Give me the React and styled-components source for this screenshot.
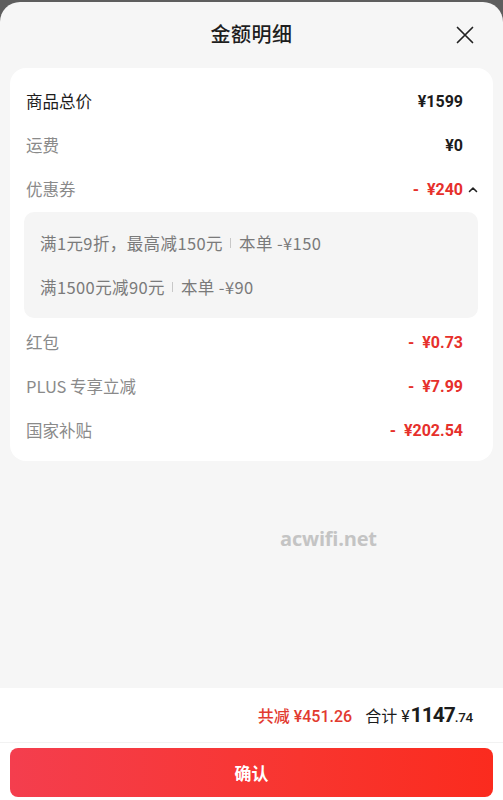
import React from "react";
import styled, { createGlobalStyle } from "styled-components";

const Global = createGlobalStyle`
  html, body { margin: 0; padding: 0; background: #5e5e5e; }
  body { font-family: "Noto Sans", "Noto Sans CJK SC", sans-serif; }
  * { box-sizing: border-box; }
`;

const Sheet = styled.div`
  margin-top: 2px;
  height: 798px;
  background: #f6f6f6;
  border-radius: 20px 20px 0 0;
  display: flex;
  flex-direction: column;
  overflow: hidden;
`;

const Header = styled.div`
  height: 66px;
  padding-bottom: 3px;
  display: flex;
  align-items: center;
  justify-content: center;
  position: relative;
`;

const Title = styled.h1`
  margin: 0;
  font-size: 20px;
  font-weight: 500;
  color: #1e1e1e;
  font-family: "Noto Sans CJK SC", sans-serif;
  letter-spacing: 0.5px;
`;

const Close = styled.button`
  position: absolute;
  right: 29px;
  top: 24px;
  width: 18px;
  height: 18px;
  padding: 0;
  border: 0;
  background: none;
  display: flex;
`;

const Body = styled.div`
  flex: 1;
  display: flex;
  flex-direction: column;
`;

const Card = styled.div`
  margin: 0 10px;
  background: #fff;
  border-radius: 16px;
  padding: 11px 15px 9px 16px;
`;

const Row = styled.div`
  height: 44px;
  display: flex;
  align-items: center;
`;

const Label = styled.span`
  flex: 1;
  font-size: 16.5px;
  font-family: "Noto Sans CJK SC", sans-serif;
  color: ${(p) => (p.$main ? "#1c1c1c" : "#8a8a8a")};
`;

const Value = styled.span`
  font-size: 16px;
  font-weight: 700;
  font-family: "Roboto", "Noto Sans CJK SC", sans-serif;
  color: ${(p) => (p.$red ? "#e6302b" : "#1c1c1c")};
  white-space: pre;
`;

const Arrow = styled.span`
  width: 15px;
  display: flex;
  justify-content: flex-end;
  align-items: center;
`;

const SubBox = styled.div`
  margin: 1px 0 2px -2px;
  background: #f5f5f5;
  border-radius: 10px;
  padding: 9px 16px;
`;

const SubRow = styled.div`
  height: 44px;
  display: flex;
  align-items: center;
  font-size: 16.5px;
  letter-spacing: 0.4px;
  color: #7a7a7a;
  font-family: "Noto Sans CJK SC", sans-serif;
`;

const Sep = styled.span`
  display: inline-block;
  width: 1px;
  height: 10px;
  background: #c8c8c8;
  margin: 0 8px 0 7px;
`;

const Watermark = styled.div`
  margin: 64px 0 0 280px;
  font-family: "Open Sans", sans-serif;
  font-weight: 700;
  font-size: 20px;
  color: #c4c4c4;
  letter-spacing: -0.2px;
`;

const Footer = styled.div`
  background: #fff;
  display: flex;
  flex-direction: column;
  height: 112px;
`;

const Summary = styled.div`
  height: 55px;
  display: flex;
  align-items: center;
  justify-content: flex-end;
  padding-right: 30px;
  border-bottom: 1px solid #f2f2f2;
  font-family: "Roboto", "Noto Sans CJK SC", sans-serif;
  gap: 13px;
`;

const Saved = styled.span`
  color: #e23a2f;
  font-size: 16px;
  font-weight: 500;
`;

const Total = styled.span`
  color: #1c1c1c;
  font-size: 16px;
  display: flex;
  align-items: baseline;
`;

const Big = styled.span`
  font-size: 21px;
  font-weight: 700;
  letter-spacing: -1px;
  margin-left: 1px;
`;

const Small = styled.span`
  font-size: 13.5px;
  font-weight: 500;
  letter-spacing: -0.3px;
`;

const Confirm = styled.button`
  margin: 5px 10px 0;
  height: 49px;
  border: 0;
  border-radius: 8px;
  background: linear-gradient(90deg, #f43e4e 0%, #f8352f 60%, #fb2b1e 100%);
  color: #fff;
  font-size: 17px;
  font-weight: 700;
  font-family: "Noto Sans CJK SC", sans-serif;
`;

const rows1 = [
  { label: "商品总价", value: "¥1599", main: true },
  { label: "运费", value: "¥0" },
];
const rows2 = [
  { label: "红包", value: "-  ¥0.73" },
  { label: "PLUS 专享立减", value: "-  ¥7.99" },
  { label: "国家补贴", value: "-  ¥202.54" },
];

export default function App() {
  return (
    <>
      <Global />
      <Sheet>
        <Header>
          <Title>金额明细</Title>
          <Close aria-label="close">
            <svg width="18" height="18" viewBox="0 0 18 18">
              <path d="M1.5 1.5 L16.5 16.5 M16.5 1.5 L1.5 16.5" stroke="#222" strokeWidth="1.7" strokeLinecap="round" />
            </svg>
          </Close>
        </Header>
        <Body>
          <Card>
            {rows1.map((r) => (
              <Row key={r.label}>
                <Label $main={r.main}>{r.label}</Label>
                <Value>{r.value}</Value>
                <Arrow />
              </Row>
            ))}
            <Row>
              <Label>优惠券</Label>
              <Value $red>-  ¥240</Value>
              <Arrow>
                <svg width="10" height="7" viewBox="0 0 10 7">
                  <path d="M1.5 5.5 L5 2 L8.5 5.5" fill="none" stroke="#222" strokeWidth="1.6" strokeLinecap="round" strokeLinejoin="round" />
                </svg>
              </Arrow>
            </Row>
            <SubBox>
              <SubRow>
                满1元9折，最高减150元<Sep />本单 -¥150
              </SubRow>
              <SubRow>
                满1500元减90元<Sep />本单 -¥90
              </SubRow>
            </SubBox>
            {rows2.map((r) => (
              <Row key={r.label}>
                <Label>{r.label}</Label>
                <Value $red>{r.value}</Value>
                <Arrow />
              </Row>
            ))}
          </Card>
          <Watermark>acwifi.net</Watermark>
        </Body>
        <Footer>
          <Summary>
            <Saved>共减 ¥451.26</Saved>
            <Total>
              合计 ¥<Big>1147</Big>
              <Small>.74</Small>
            </Total>
          </Summary>
          <Confirm>确认</Confirm>
        </Footer>
      </Sheet>
    </>
  );
}
